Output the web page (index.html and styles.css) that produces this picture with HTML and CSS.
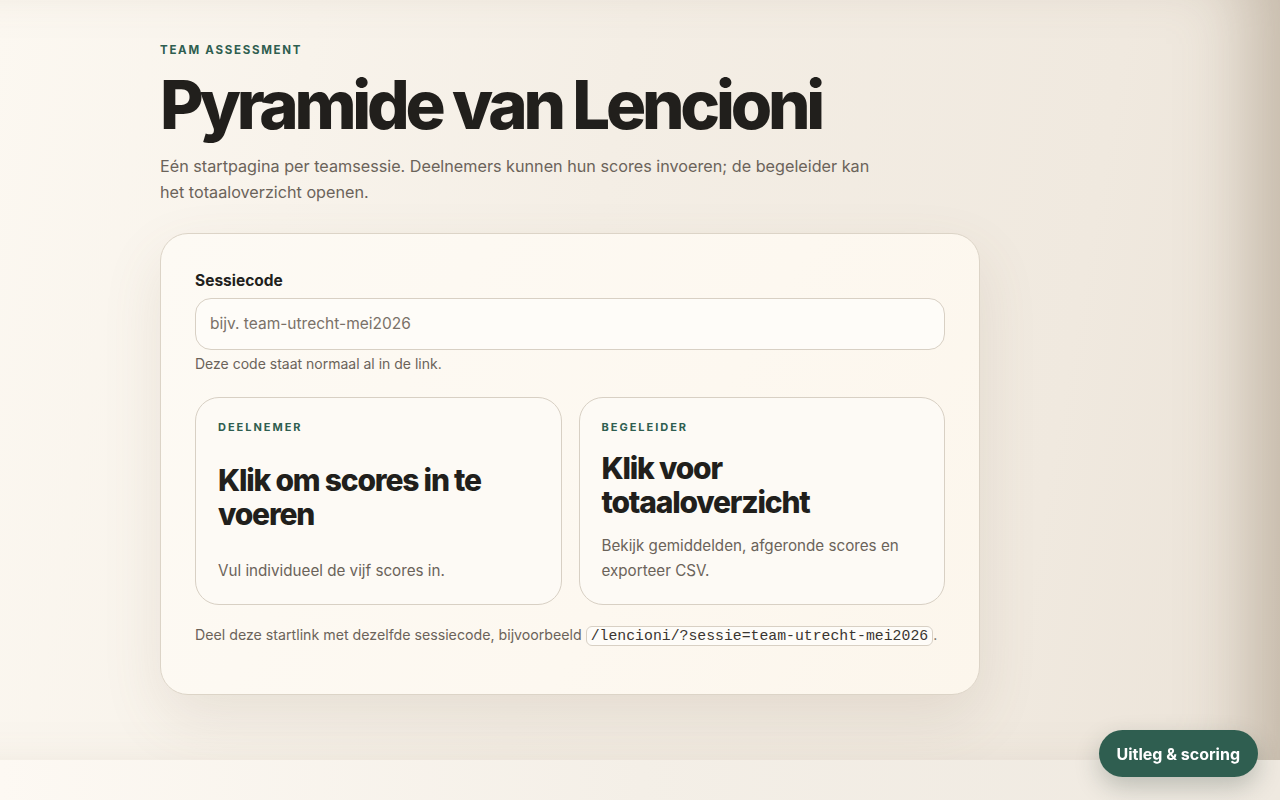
FILE: index.html
```html
<!DOCTYPE html>
<html lang="nl">
<head>
    <meta charset="UTF-8">
    <meta name="viewport" content="width=device-width, initial-scale=1.0">
    <title>Pyramide van Lencioni</title>
    <link rel="stylesheet" href="styles.css">
</head>
<body>
    <main class="page">
        <div class="wrap">
            <p class="eyebrow">Team assessment</p>
            <h1>Pyramide van Lencioni</h1>
            <p class="intro">Eén startpagina per teamsessie. Deelnemers kunnen hun scores invoeren; de begeleider kan het totaaloverzicht openen.</p>

            <section class="panel">
                <label class="field-label" for="sessie">Sessiecode</label>
                <input id="sessie" class="field" type="text" placeholder="bijv. team-utrecht-mei2026">
                <p class="hint">Deze code staat normaal al in de link.</p>

                <div class="choices">
                    <a class="choice" href="#">
                        <span class="choice-tag">Deelnemer</span>
                        <h2>Klik om scores in te voeren</h2>
                        <p>Vul individueel de vijf scores in.</p>
                    </a>
                    <a class="choice" href="#">
                        <span class="choice-tag">Begeleider</span>
                        <h2>Klik voor totaaloverzicht</h2>
                        <p>Bekijk gemiddelden, afgeronde scores en exporteer CSV.</p>
                    </a>
                </div>

                <p class="share">Deel deze startlink met dezelfde sessiecode, bijvoorbeeld <code>/lencioni/?sessie=team-utrecht-mei2026</code>.</p>
            </section>
        </div>
    </main>
    <button class="help-btn" type="button">Uitleg &amp; scoring</button>
</body>
</html>
```

FILE: styles.css
```css
html, body {
    margin: 0;
    padding: 0;
}
body {
    font-family: Inter, "Noto Sans", sans-serif;
    color: #221f1c;
    background: linear-gradient(90deg, #fdf9f3 0%, #f4efe7 50%, #efe9e0 100%);
}
.page {
    height: 760px;
    background: linear-gradient(100deg, #fcf8f1 0%, #f4eee5 45%, #f0e9df 80%, #ebe3d8 100%);
    box-shadow: inset -70px 0 70px -40px rgba(120, 100, 75, 0.35);
}
.wrap {
    width: 820px;
    padding: 43px 0 0 160px;
}
.eyebrow {
    margin: 0;
    font-size: 11.5px;
    line-height: 14px;
    font-weight: 700;
    letter-spacing: 0.15em;
    text-transform: uppercase;
    color: #2f5e50;
}
h1 {
    margin: 11px 0 0;
    font-size: 67px;
    line-height: 1.1;
    font-weight: 800;
    letter-spacing: -0.063em;
    color: #211f1c;
}
.intro {
    margin: 11px 0 0;
    max-width: 730px;
    font-size: 16.2px;
    line-height: 26px;
    color: #6b635a;
}
.panel {
    margin-top: 28px;
    padding: 37px 34px 48px;
    border: 1px solid #dcd4c7;
    border-radius: 28px;
    background: linear-gradient(120deg, #fdfaf4 0%, #fdf8f0 60%, #fcf6ec 100%);
    box-shadow: 0 24px 60px rgba(120, 100, 70, 0.12);
}
.field-label {
    display: block;
    font-size: 15.5px;
    line-height: 19px;
    font-weight: 700;
    color: #221f1c;
}
.field {
    box-sizing: border-box;
    display: block;
    width: 100%;
    height: 52px;
    margin-top: 8px;
    padding: 0 14px;
    border: 1px solid #d8d0c4;
    border-radius: 16px;
    background: #fefcf8;
    font-family: inherit;
    font-size: 15.5px;
    color: #221f1c;
}
.field::placeholder {
    color: #7a7168;
}
.hint {
    margin: 5px 0 0;
    font-size: 14px;
    line-height: 17px;
    color: #6b635a;
}
.choices {
    display: grid;
    grid-template-columns: 1fr 1fr;
    gap: 17px;
    margin-top: 25px;
}
.choice {
    display: flex;
    flex-direction: column;
    justify-content: space-between;
    padding: 22px 22px 21px;
    border: 1px solid #d8d0c4;
    border-radius: 24px;
    background: #fdfaf5;
    text-decoration: none;
    color: inherit;
}
.choice-tag {
    font-size: 11px;
    line-height: 14px;
    font-weight: 700;
    letter-spacing: 0.18em;
    text-transform: uppercase;
    color: #2f5e50;
}
.choice h2 {
    margin: 17px 0 14px;
    font-size: 30px;
    line-height: 34px;
    font-weight: 800;
    letter-spacing: -0.04em;
    color: #211f1c;
}
.choice p {
    margin: 0;
    font-size: 15.2px;
    line-height: 25px;
    color: #6b635a;
}
.share {
    margin: 20px 0 0;
    font-size: 14.2px;
    line-height: 20px;
    color: #6b635a;
}
.share code {
    padding: 1px 4px;
    border: 1px solid #d8d0c4;
    border-radius: 6px;
    background: #fefcf8;
    font-family: "Liberation Mono", "DejaVu Sans Mono", monospace;
    font-size: 14.8px;
    color: #3a3530;
}
.help-btn {
    position: fixed;
    right: 22px;
    bottom: 23px;
    height: 47px;
    padding: 0 18px;
    border: 0;
    border-radius: 24px;
    background: #2f5e50;
    color: #ffffff;
    font-family: inherit;
    font-size: 16px;
    font-weight: 700;
    box-shadow: 0 10px 24px rgba(40, 60, 50, 0.25);
    cursor: pointer;
}
```
